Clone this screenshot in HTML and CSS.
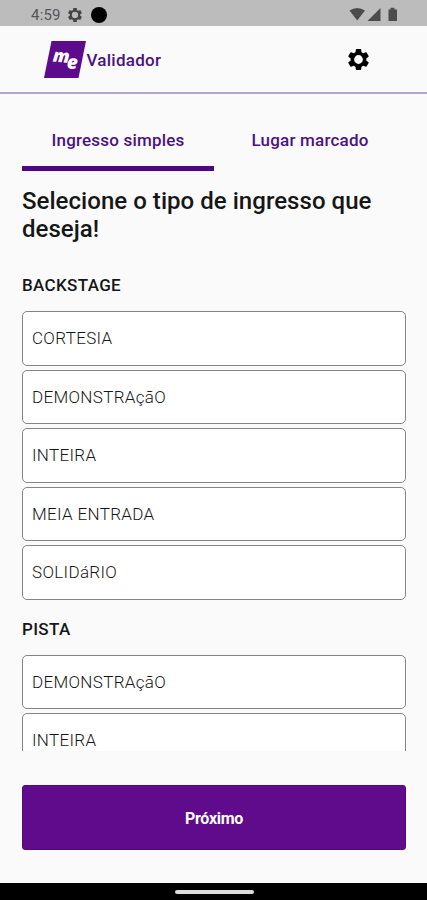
FILE: index.html
```html
<!DOCTYPE html>
<html lang="pt-BR">
<head>
<meta charset="utf-8">
<title>Validador</title>
<link rel="stylesheet" href="styles.css">
</head>
<body>
<div class="screen">
  <div class="status">
    <span class="time">4:59</span>
    <svg class="status-gear" viewBox="2 2 20 20"><path fill-rule="evenodd" d="M19.43 12.98c.04-.32.07-.64.07-.98s-.03-.66-.07-.98l2.11-1.65c.19-.15.24-.42.12-.64l-2-3.46c-.12-.22-.39-.3-.61-.22l-2.49 1c-.52-.4-1.08-.73-1.69-.98l-.38-2.65A.49.49 0 0 0 14 2h-4c-.25 0-.46.18-.49.42l-.38 2.65c-.61.25-1.17.59-1.69.98l-2.49-1c-.23-.09-.49 0-.61.22l-2 3.46c-.13.22-.07.49.12.64l2.11 1.65c-.04.32-.07.65-.07.98s.03.66.07.98l-2.11 1.65c-.19.15-.24.42-.12.64l2 3.46c.12.22.39.3.61.22l2.49-1c.52.4 1.08.73 1.69.98l.38 2.65c.03.24.24.42.49.42h4c.25 0 .46-.18.49-.42l.38-2.65c.61-.25 1.17-.59 1.69-.98l2.49 1c.23.09.49 0 .61-.22l2-3.46c.12-.22.07-.49-.12-.64zM12 16.5a4.500 4.500 0 1 1 0-9 4.500 4.500 0 0 1 0 9z"/></svg>
    <span class="dot"></span>
    <svg class="signals" viewBox="0 0 50 16">
      <path d="M.5 3.500Q8.200 -1.500 16 3.500L8.200 13.500z"/>
      <path d="M18.500 14L31.500 1v13z"/>
      <path d="M39.500 2.500h2V.8h4v1.700H48V14h-8.500z"/>
    </svg>
  </div>
  <header class="header">
    <svg class="logo" viewBox="0 0 42 37">
      <path d="M7.500 0H42L34.500 37H0z"/>
      <text class="logo-m" x="8.500" y="20.500" transform="rotate(5 9 21)">m</text>
      <text class="logo-e" x="22.500" y="27.500" transform="rotate(3 22 27)">e</text>
    </svg>
    <span class="brand">Validador</span>
    <svg class="gear" viewBox="2 2 20 20"><path fill-rule="evenodd" d="M19.43 12.98c.04-.32.07-.64.07-.98s-.03-.66-.07-.98l2.11-1.65c.19-.15.24-.42.12-.64l-2-3.46c-.12-.22-.39-.3-.61-.22l-2.49 1c-.52-.4-1.08-.73-1.69-.98l-.38-2.65A.49.49 0 0 0 14 2h-4c-.25 0-.46.18-.49.42l-.38 2.65c-.61.25-1.17.59-1.69.98l-2.49-1c-.23-.09-.49 0-.61.22l-2 3.46c-.13.22-.07.49.12.64l2.11 1.65c-.04.32-.07.65-.07.98s.03.66.07.98l-2.11 1.65c-.19.15-.24.42-.12.64l2 3.46c.12.22.39.3.61.22l2.49-1c.52.4 1.08.73 1.69.98l.38 2.65c.03.24.24.42.49.42h4c.25 0 .46-.18.49-.42l.38-2.65c.61-.25 1.17-.59 1.69-.98l2.49 1c.23.09.49 0 .61-.22l2-3.46c.12-.22.07-.49-.12-.64zM12 16.200a4.200 4.200 0 1 1 0-8.400 4.200 4.200 0 0 1 0 8.400z"/></svg>
  </header>
  <nav class="tabs">
    <a class="tab active">Ingresso simples</a>
    <a class="tab">Lugar marcado</a>
  </nav>
  <main class="list">
    <h1>Selecione o tipo de ingresso que deseja!</h1>
    <h2>BACKSTAGE</h2>
    <div class="options">
      <div class="option">CORTESIA</div>
      <div class="option">DEMONSTRAçãO</div>
      <div class="option">INTEIRA</div>
      <div class="option">MEIA ENTRADA</div>
      <div class="option">SOLIDáRIO</div>
    </div>
    <h2>PISTA</h2>
    <div class="options">
      <div class="option">DEMONSTRAçãO</div>
      <div class="option">INTEIRA</div>
    </div>
  </main>
  <button class="next">Próximo</button>
  <footer class="system"><span class="pill"></span></footer>
</div>
</body>
</html>
```
FILE: styles.css
```css
* { box-sizing: border-box; }
body { margin: 0; font-family: Roboto, sans-serif; color: #161616; }
.screen { width: 427px; height: 900px; display: flex; flex-direction: column; background: #fafafa; overflow: hidden; }
.status { height: 26px; flex: none; background: #bcbcbc; display: flex; align-items: center; padding: 3px 28px 0 31px; color: #555; }
.time { width: 37px; font-size: 15px; letter-spacing: 0.2px; }
.status-gear { width: 14px; height: 14px; fill: #444; }
.dot { width: 16px; height: 16px; border-radius: 50%; background: #000; margin-left: 9px; }
.signals { width: 50px; height: 16px; margin-left: auto; fill: #4b4b4b; }
.header { height: 68px; flex: none; display: flex; align-items: center; padding: 1px 58px 0 44px; border-bottom: 2px solid #b3a8cc; }
.logo { width: 42px; height: 37px; fill: #5b0b8c; }
.logo text { fill: #fff; font-family: "Open Sans", sans-serif; font-weight: 800; font-style: italic; }
.logo-m { font-size: 18px; }
.logo-e { font-size: 19px; }
.brand { font-size: 17px; font-weight: 500; letter-spacing: 0.25px; color: #4b1284; margin-left: 0.5px; padding-top: 1px; }
.gear { width: 21px; height: 21px; margin-left: auto; fill: #000; }
.tabs { height: 77px; flex: none; display: grid; grid-template-columns: 1fr 1fr; padding: 17px 21px 0 22px; }
.tab { height: 60px; display: flex; justify-content: center; padding-top: 19px; font-size: 17px; line-height: 20px; font-weight: 500; letter-spacing: 0.2px; color: #4b1284; }
.active { border-bottom: 5px solid #500684; }
.list { height: 580px; flex: none; padding: 16px 21px 0 22px; overflow: hidden; }
h1 { margin: 0; font-size: 24px; line-height: 28px; font-weight: 500; letter-spacing: 0.04px; }
h2 { margin: 0; font-size: 17px; line-height: 20px; font-weight: 500; letter-spacing: 0.35px; padding: 32px 0 16px; }
.options + h2 { padding: 19px 0 16px; }
.options { display: flex; flex-direction: column; gap: 4px; }
.option { height: 54.5px; flex: none; border: 1px solid #858585; border-radius: 5px; background: #fff; padding-left: 9px; display: flex; align-items: center; font-size: 17px; font-weight: 300; letter-spacing: 0.33px; }
.next { flex: none; height: 65px; margin: 34px 21px 0 22px; border: 1px solid #540980; border-radius: 3px; background: #5f0b8b; color: #fff; font-family: inherit; font-size: 16px; letter-spacing: -0.3px; font-weight: 700; padding: 2px 0 0; }
.system { margin-top: auto; height: 17px; flex: none; background: #000; display: flex; justify-content: center; padding: 7px 0 0 2px; }
.pill { width: 79px; height: 4px; border-radius: 2px; background: #ddd; }
```
